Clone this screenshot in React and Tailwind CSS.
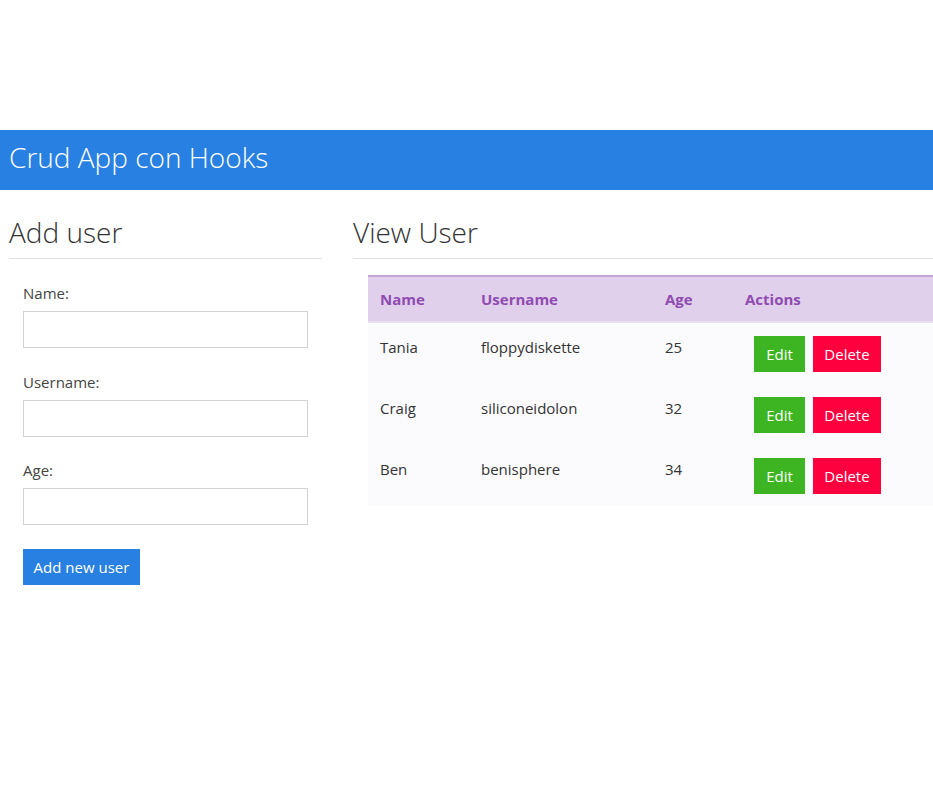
export default function App() {
  const users = [
    { name: "Tania", username: "floppydiskette", age: 25 },
    { name: "Craig", username: "siliconeidolon", age: 32 },
    { name: "Ben", username: "benisphere", age: 34 },
  ];
  return (
    <div className="min-h-[802px] w-[933px] overflow-hidden bg-white text-[15px] leading-6 text-[#333]" style={{ fontFamily: '"Open Sans", "Noto Sans", sans-serif' }}>
      <div className="h-[130px]" />
      <div className="flex h-[60px] items-center bg-[#2980e3] pb-[6px] pl-[9px]">
        <h1 className="text-[28px] font-light leading-9 text-white">Crud App con Hooks</h1>
      </div>
      <div className="flex gap-[31px] pl-[9px]">
        <div className="w-[313px] shrink-0">
          <h2 className="mt-6 border-b border-[#e2e2e2] pb-2 text-[28px] font-light leading-9 text-[#333]">Add user</h2>
          <form className="flex flex-col pl-[14px] pt-[22px]" onSubmit={(e) => e.preventDefault()}>
            <label className="text-[#444]">Name:</label>
            <input className="mt-[6px] h-[37px] w-[285px] border border-[#d2d2d2] bg-white" />
            <label className="mt-[22px] text-[#444]">Username:</label>
            <input className="mt-[6px] h-[37px] w-[285px] border border-[#d2d2d2] bg-white" />
            <label className="mt-[21px] text-[#444]">Age:</label>
            <input className="mt-[6px] h-[37px] w-[285px] border border-[#d2d2d2] bg-white" />
            <div>
              <button type="submit" className="mt-[24px] h-9 w-[117px] bg-[#2980e3] text-white">Add new user</button>
            </div>
          </form>
        </div>
        <div className="min-w-0 flex-1">
          <h2 className="mt-6 border-b border-[#e2e2e2] pb-2 text-[28px] font-light leading-9 text-[#333]">View User</h2>
          <div className="ml-[15px] mt-[16px] w-[600px]">
            <div className="flex h-[48px] items-center border-t-2 border-b-2 border-t-[#c8a5d9] border-b-[#e6e1ec] bg-[#e1d0ec] font-bold text-[#8f4bb0]">
              <div className="w-[101px] pl-3">Name</div>
              <div className="w-[184px] pl-3">Username</div>
              <div className="w-[80px] pl-3">Age</div>
              <div className="flex-1 pl-3">Actions</div>
            </div>
            {users.map((u) => (
              <div key={u.name} className="flex h-[61px] bg-[#fbfbfe]">
                <div className="w-[101px] pl-3 pt-3">{u.name}</div>
                <div className="w-[184px] pl-3 pt-3">{u.username}</div>
                <div className="w-[80px] pl-3 pt-3">{u.age}</div>
                <div className="flex flex-1 gap-2 pl-[21px] pt-[13px]">
                  <button className="h-9 w-[51px] bg-[#3db523] text-white">Edit</button>
                  <button className="h-9 w-[68px] bg-[#ff003f] text-white">Delete</button>
                </div>
              </div>
            ))}
          </div>
        </div>
      </div>
    </div>
  );
}
